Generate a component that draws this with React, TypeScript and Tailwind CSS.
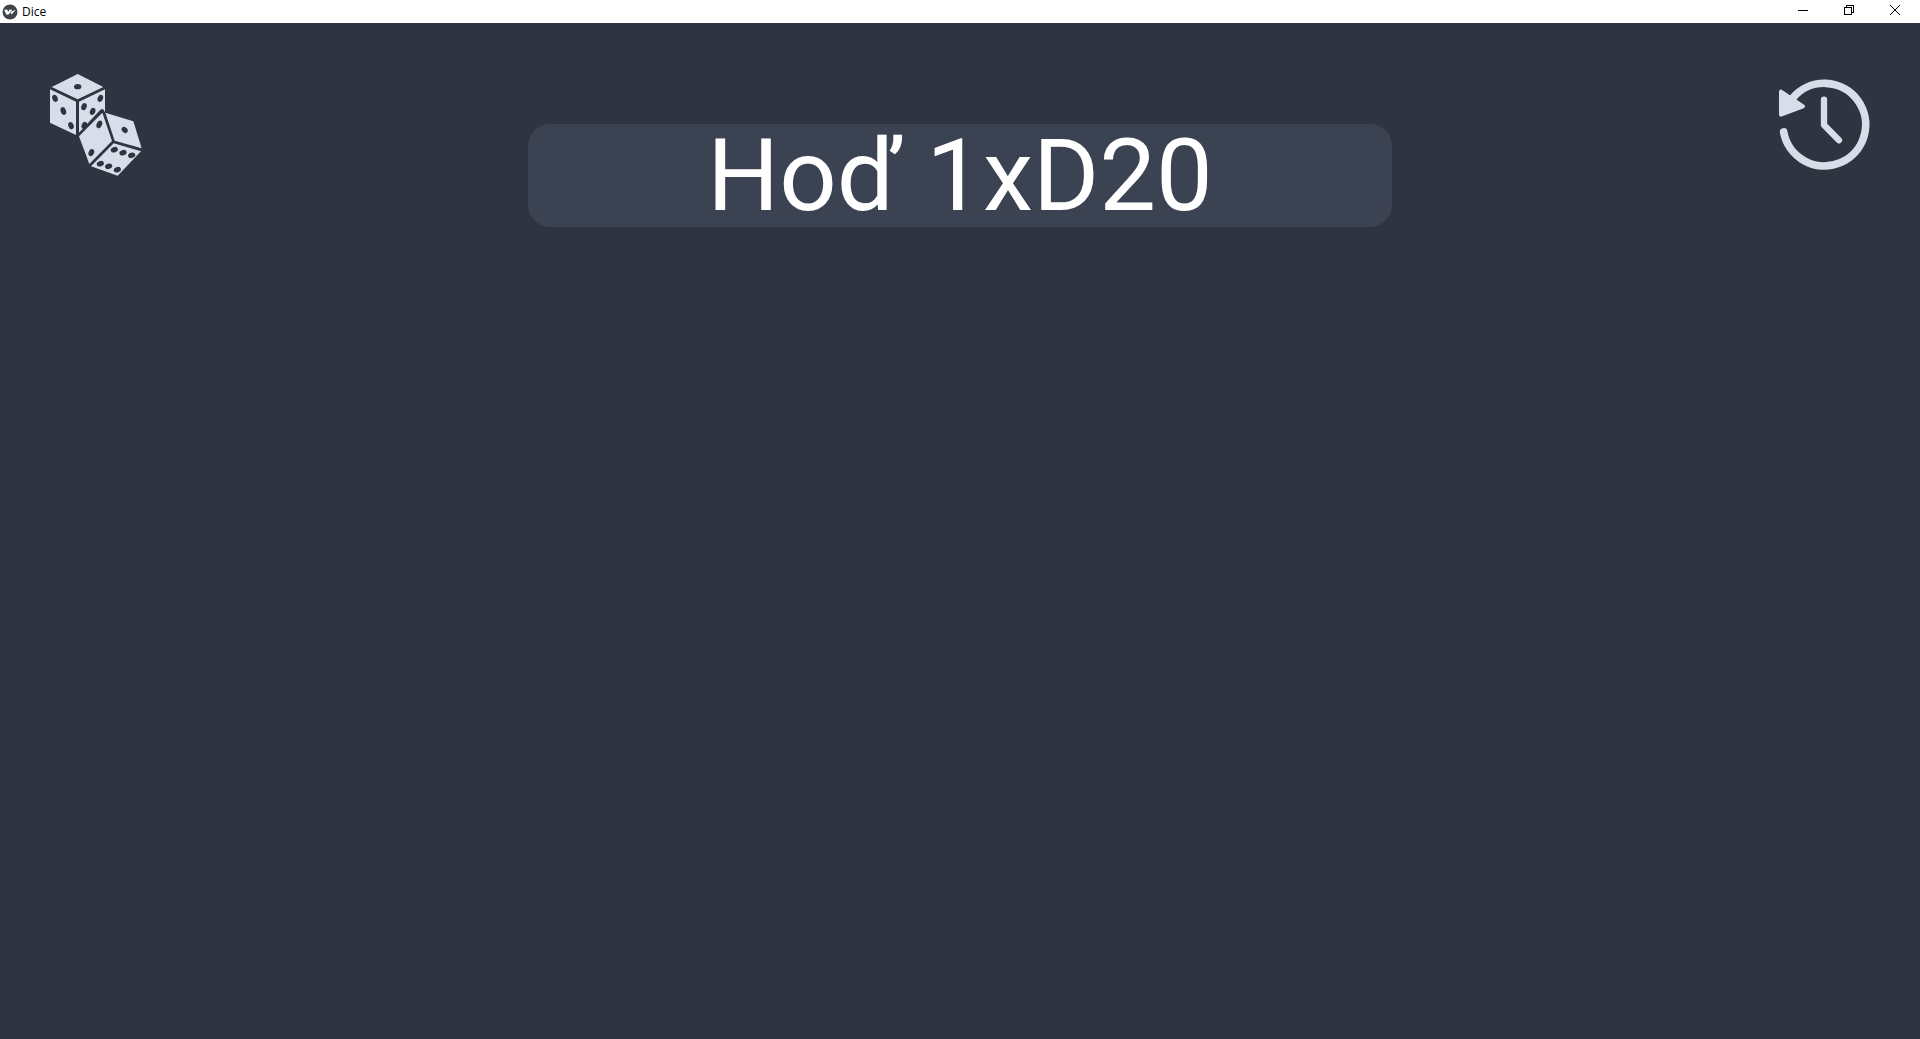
const dots: [number, number, number, number, number][] = [
  [113, 65, 11, 8, 0],
  [45, 100, 8, 11, -20],
  [70, 138, 8, 12, -20],
  [93, 182, 8, 11, -20],
  [181, 100, 8, 11, 20],
  [132, 125, 8, 11, 20],
  [158, 139, 8, 11, 20],
  [133, 181, 8, 11, 20],
];

const lowerDots: [number, number, number, number, number][] = [
  [178, 178, 8, 12, 25],
  [154, 263, 8, 11, 25],
  [254, 195, 10, 8, 40],
  [223, 254, 11, 8, -20],
  [249, 263, 11, 8, -20],
  [275, 271, 11, 8, -20],
  [181, 296, 11, 8, -20],
  [206, 304, 11, 8, -20],
  [232, 314, 11, 8, -20],
];

function Pips({ items }: { items: [number, number, number, number, number][] }) {
  return (
    <g fill="#2e3440">
      {items.map(([x, y, rx, ry, a]) => (
        <ellipse key={`${x}-${y}`} cx={x} cy={y} rx={rx} ry={ry} transform={`rotate(${a} ${x} ${y})`} />
      ))}
    </g>
  );
}

function DiceIcon() {
  return (
    <svg viewBox="15 27 306 306" className="block size-full" fill="#d8dee9" aria-hidden="true">
      <path d="M113 27 190 66 113 103 35 66Z" />
      <path d="M30 73 108 110V210L30 173Z" />
      <path d="M117 110 195 73V142L189 132 181 134 117 203Z" />
      <Pips items={dots} />
      <path d="M186 133 119 205 107 215 117 218 192 145Z" fill="#2e3440" />
      <path d="M187 143 117 214 148 297 216 228Z" />
      <path d="M196 143 280 169 305 250 224 227Z" />
      <path d="M221 235 303 259 233 332 153 304Z" />
      <Pips items={lowerDots} />
    </svg>
  );
}

function HistoryIcon() {
  return (
    <svg viewBox="24 10 306 306" className="block size-full" fill="none" stroke="#d8dee9" strokeLinecap="round" strokeLinejoin="round" aria-hidden="true">
      <path d="M56 184A124 124 0 1 0 84 81" strokeWidth="23" />
      <path d="M177 87V163L222 209" strokeWidth="19" />
      <path d="M48 63V132L114 107Z" fill="#d8dee9" strokeWidth="12" />
    </svg>
  );
}

function TitleBar() {
  return (
    <header className="flex h-[23px] shrink-0 items-center bg-white pr-0.5 text-black">
      <svg viewBox="0 0 16 16" className="ml-0.5 size-4" aria-hidden="true">
        <circle cx="8" cy="8" r="7.5" fill="#404347" />
        <path d="M2.2 5.7 5 5.5 6.4 7.8 7.5 5.5 9.7 5.7 10.2 7.3 13.8 5.7 9.6 10.6 8.4 8.2 6.3 10.8 4.2 10.5Z" fill="#fff" />
        <path d="M8.4 8.2 10.2 7.3" stroke="#404347" strokeWidth="0.7" />
      </svg>
      <h1 className="ml-1 flex-1 font-['Open_Sans',sans-serif] text-xs leading-4">Dice</h1>
      <button type="button" aria-label="Minimize" className="flex h-full w-[46px] items-center justify-center pb-[3px]">
        <svg viewBox="0 0 10 10" className="size-2.5" shapeRendering="crispEdges" aria-hidden="true">
          <path d="M0 5.5H10" stroke="#000" />
        </svg>
      </button>
      <button type="button" aria-label="Restore" className="flex h-full w-[46px] items-center justify-center pb-[3px]">
        <svg viewBox="0 0 10 10" className="size-2.5" fill="none" stroke="#000" shapeRendering="crispEdges" aria-hidden="true">
          <path d="M.5 2.5H7.5V9.5H.5ZM2.5 2.5V.5H9.5V7.5H7.5" />
        </svg>
      </button>
      <button type="button" aria-label="Close" className="flex h-full w-[46px] items-center justify-center pb-[3px]">
        <svg viewBox="0 0 10 10" className="size-2.5" stroke="#000" aria-hidden="true">
          <path d="M0 0 10 10M10 0 0 10" />
        </svg>
      </button>
    </header>
  );
}

export default function App() {
  return (
    <div className="flex min-h-screen flex-col bg-[#2e3440]">
      <TitleBar />
      <main className="flex flex-1 items-start justify-between px-[45px] pt-[51px]">
        <button type="button" aria-label="Dice" className="size-[102px] shrink-0">
          <DiceIcon />
        </button>
        <button
          type="button"
          className="mt-[50px] flex w-[45vw] items-center justify-center rounded-[22px] bg-[#3b4252] pt-px font-[Roboto,sans-serif] text-[101px] leading-[102px] whitespace-nowrap text-white"
        >
          Hoď 1xD20
        </button>
        <button type="button" aria-label="History" className="size-[102px] shrink-0">
          <HistoryIcon />
        </button>
      </main>
    </div>
  );
}
